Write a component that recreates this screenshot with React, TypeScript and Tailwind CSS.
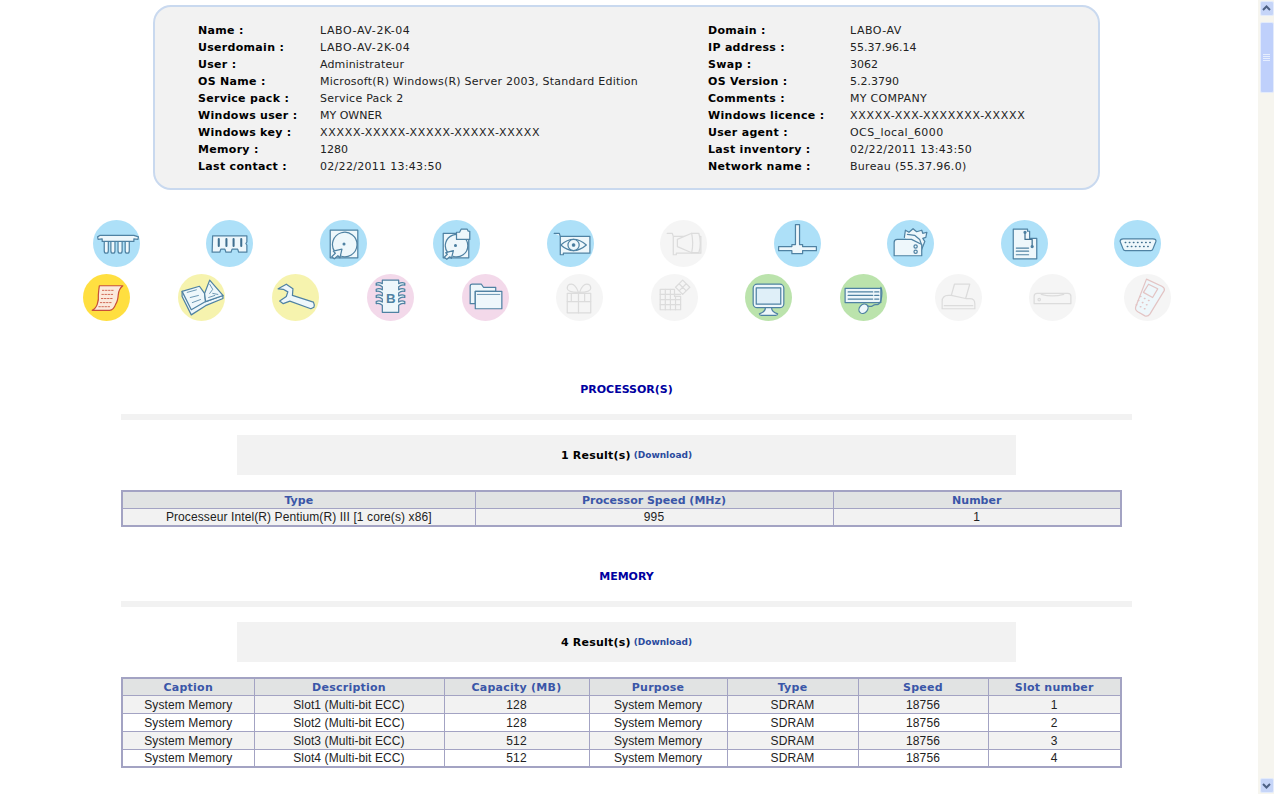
import React from 'react';

const verdana = 'font-["DejaVu_Sans",sans-serif]';

const wide = 'tracking-[0.6px]';
const key = 'tracking-[0.7px]';
const normal = 'tracking-[0.25px]';
const none = 'tracking-normal';

const leftInfo = [
  ['Name :', 'LABO-AV-2K-04', wide],
  ['Userdomain :', 'LABO-AV-2K-04', wide],
  ['User :', 'Administrateur', 'tracking-[0.15px]'],
  ['OS Name :', 'Microsoft(R) Windows(R) Server 2003, Standard Edition', normal],
  ['Service pack :', 'Service Pack 2', normal],
  ['Windows user :', 'MY OWNER', none],
  ['Windows key :', 'XXXXX-XXXXX-XXXXX-XXXXX-XXXXX', key],
  ['Memory :', '1280', none],
  ['Last contact :', '02/22/2011 13:43:50', 'tracking-[0.3px]'],
];

const rightInfo = [
  ['Domain :', 'LABO-AV', 'tracking-[0.5px]'],
  ['IP address :', '55.37.96.14', none],
  ['Swap :', '3062', none],
  ['OS Version :', '5.2.3790', none],
  ['Comments :', 'MY COMPANY', 'tracking-[0.3px]'],
  ['Windows licence :', 'XXXXX-XXX-XXXXXXX-XXXXX', key],
  ['User agent :', 'OCS_local_6000', 'tracking-[0.4px]'],
  ['Last inventory :', '02/22/2011 13:43:50', 'tracking-[0.3px]'],
  ['Network name :', 'Bureau (55.37.96.0)', 'tracking-[0.3px]'],
];

const BLUE = '#ade0f8';
const GRAY = '#f5f5f5';
const PINK = '#f3d9ea';
const PALE = '#f6f3ae';
const GREEN = '#bbe3ac';

const row1: { bg: string; muted?: boolean; art: React.ReactNode }[] = [
  {
    bg: BLUE,
    art: (
      <>
        <path d="M11 21v9q0 2.500 2 2.500t2-2.500v-9M17.500 21v9q0 2.500 2 2.500t2-2.500v-9M24.500 21v9q0 2.500 2 2.500t2-2.500v-9M31.500 21v9q0 2.500 2 2.500t2-2.500v-9" />
        <path d="M7 15h33l4.500 1.500-.5 2.500-4-.5v2.500h-31v-2.500l-4 .5-.5-2.500z" />
      </>
    ),
  },
  {
    bg: BLUE,
    art: (
      <>
        <path d="M6.500 15.500h33.500v6l-1 1.500 1 1.500v7h-8l-1-3h-5.500l-1 3h-5l-1-3h-4l-1 3h-7.500z" />
        <path d="M12.500 18.500v7M20 18.500v7M27 18.500v7M34.500 18.500v7" strokeWidth={2} stroke="#3f6f8f" />
      </>
    ),
  },
  {
    bg: BLUE,
    art: (
      <>
        <rect x="10" y="10" width="27" height="27" />
        <path d="M14.500 31a12 12 0 1 1 5 4" />
        <circle cx="23.500" cy="23.500" r="0.900" fill="#3f6f8f" />
        <path d="M11.500 36l3.500-3.500-2-2 8.500-2-2 8.500-2-2-3.500 3z" />
      </>
    ),
  },
  {
    bg: BLUE,
    art: (
      <>
        <rect x="10" y="13" width="25" height="24" />
        <path d="M14.500 32a11 11 0 1 1 5 3.500" />
        <circle cx="22" cy="25" r="0.900" fill="#3f6f8f" />
        <path d="M11 36.500l3-3-1.500-1.500 7.500-2-2 7.500-1.500-1.500-3 2.500z" />
        <path d="M23 12h3l1.500-3h6l1 2h1.500v8h-13z" />
      </>
    ),
  },
  {
    bg: BLUE,
    art: (
      <>
        <path d="M7 13h5l1 3v18h3v-1.500h26v-16.500h-29" />
        <path d="M13.500 24.500q12.500-11 25 0q-12.500 11-25 0z" />
        <circle cx="26" cy="24.500" r="5.500" />
        <circle cx="26" cy="24.500" r="1.200" fill="#3f6f8f" />
      </>
    ),
  },
  {
    bg: GRAY,
    muted: true,
    art: (
      <>
        <path d="M7 13h5l1 3v18h3v-1.500h24v-16.500h-27" />
        <path d="M17 19l14-6h7q3 10 0 19h-7l-14-6z" />
        <path d="M31 13q2 10 0 19" />
      </>
    ),
  },
  {
    bg: BLUE,
    art: <path d="M21 4.500h4v19.500h3v2h13.500v4h-13.500v3h-10.500v-3h-13v-4h13v-2h3.500z" />,
  },
  {
    bg: BLUE,
    art: (
      <>
        <path d="M17 17l1-7 3.500 2 4-3.500 3.500 3 5-1.500 1 3 4-1-1 5-3 1 2 3-4 10" />
        <path d="M20 14l7 1 5 4 2 6" />
        <path d="M7 22q0-3 3-3h14l10 5v11h-27z" />
        <circle cx="28" cy="26" r="1.600" />
        <circle cx="28" cy="31" r="1.600" />
      </>
    ),
  },
  {
    bg: BLUE,
    art: (
      <>
        <path d="M12 9h14v2h2v7h7v20h-23z" />
        <path d="M23.500 12v7h7v7" stroke="#3f6f8f" />
        <circle cx="23.500" cy="12" r="1" fill="#3f6f8f" />
        <circle cx="30.500" cy="26" r="1" fill="#3f6f8f" />
        <path d="M15 27.500h12M15 30.500h12M15 34h12" />
      </>
    ),
  },
  {
    bg: BLUE,
    art: (
      <>
        <path d="M6 21q0-2.500 3-2.500h29q3.500 0 3 2.500l-3 7.500q-.5 1.500-2 1.500h-25q-1.500 0-2-1.500z" />
        <path d="M11 22h.5M15 22h.5M19 22h.5M23 22h.5M27 22h.5M31 22h.5M35 22h.5M13 26h.5M17 26h.5M21 26h.5M25 26h.5M29 26h.5M33 26h.5" strokeWidth={1.400} stroke="#3f6f8f" />
      </>
    ),
  },
];

const row2: { bg: string; muted?: boolean; stroke?: string; art: React.ReactNode }[] = [
  {
    bg: '#ffdf40',
    stroke: '#c8503a',
    art: (
      <>
        <path d="M16 11.500h23q-4 3-4.500 9t-2.500 9q-2 6-6 6h-17q3.500-1.500 5-6t1-9q.5-6 1-9z" fill="#fbe9dc" />
        <path d="M19 16h12M18.500 20h12M18 24h12M17 28h11M15.500 32h11" strokeDasharray="1.500 1.500" strokeWidth={0.800} />
      </>
    ),
  },
  {
    bg: PALE,
    art: (
      <>
        <path d="M4 17v5l9 18 14-9 17-7v-3l-17 6z" />
        <path d="M4 17l17-5 5 7 1 8-14 8z" />
        <path d="M26 19l5-13 13 15-17 6z" />
        <path d="M9 18l9-2.500M12 23l8-2M14 28l8-3M31 10l3 5-3 4M34 19l5 1M30 23l6-2" strokeWidth={0.800} />
      </>
    ),
  },
  {
    bg: PALE,
    art: <path d="M6 14.500l8-4.500 6.500 4.500-.5 6.500 20.500 6.500q1.500 3 .5 5l-3 1.500-20.500-7.500-6.500 2.500-3.500-2.500 6.500-4.500 1.500-4.500-4.500-2.500z" />,
  },
  {
    bg: PINK,
    art: (
      <>
        <path d="M15 6h16v3.500q3-2 6-.5v2q-3-1-6 1.500v3q3-2 6-.5v2q-3-1-6 1.500v3q3-2 6-.5v2q-3-1-6 1.500v3q3-2 6-.5v2q-3-1-6 1.500v7h-16v-7q-3-2.500-6-1.500v-2q3-1.500 6 .5v-3q-3-2.500-6-1.500v-2q3-1.500 6 .5v-3q-3-2.500-6-1.500v-2q3-1.500 6 .5v-3q-3-2.500-6-1.500v-2q3-1.500 6 .5z" />
        <text x="23.300" y="28" textAnchor="middle" fontSize="13" fontWeight="700" fill="#4f82a3" stroke="none" fontFamily="'Liberation Sans', sans-serif">
          B
        </text>
      </>
    ),
  },
  {
    bg: PINK,
    art: (
      <>
        <path d="M8 12q0-2 2-2h9l2 3h12v4h-20v12h-5z" />
        <path d="M13 17h26v17h-26z" />
        <path d="M15 20h22" strokeWidth={0.800} />
      </>
    ),
  },
  {
    bg: GRAY,
    muted: true,
    art: (
      <>
        <path d="M11 19h23v19h-23z" />
        <path d="M11 27h23M22 19v19M15 19v8M28 19v8" />
        <path d="M22 18q-11 0-11-4t4-4 7 8zM23 18q11 0 11-4t-4-4-7 8z" />
      </>
    ),
  },
  {
    bg: GRAY,
    muted: true,
    art: (
      <>
        <path d="M9 15h14v7h6v13h-20z" />
        <path d="M9 20h20M9 25h20M9 30h20M14 15v20M19 15v20M24 22v13" />
        <path d="M31 6l7 7-7 7-7-7zM27.500 9.500l7 7M34.500 9.500l-7 7" />
      </>
    ),
  },
  {
    bg: GREEN,
    art: (
      <>
        <rect x="8" y="10" width="30" height="23" rx="4" />
        <rect x="11" y="13.500" width="24" height="16" fill="#dfeff8" />
        <path d="M20 33h6q0 4 6 6q0 1.500-2 1.500h-14q-2 0-2-1.500q6-2 6-6z" />
      </>
    ),
  },
  {
    bg: GREEN,
    art: (
      <>
        <path d="M5 14h35v14h-35z" />
        <path d="M8 17.500h24M8 21h24M8 24.500h24M34 17.500h4M34 21h4M34 24.500h4" />
        <ellipse cx="23" cy="34" rx="4" ry="5" transform="rotate(40 23 34)" />
        <path d="M27 31q3 1.500 5 0t4-1 4-4q2-8 0-13" fill="none" />
      </>
    ),
  },
  {
    bg: GRAY,
    muted: true,
    art: (
      <>
        <path d="M16 21l3-11h15l-4 14h-14z" />
        <path d="M7 27q0-6 6-6h3l14 3h4q5 0 5 5v5h-32z" />
        <path d="M9 31h28" />
      </>
    ),
  },
  {
    bg: GRAY,
    muted: true,
    art: (
      <>
        <path d="M5 22q0-3 3-3h30q3 0 3 3v7h-36z" />
        <path d="M12 20q11 3 22 0" />
        <circle cx="10" cy="25" r="1.200" />
      </>
    ),
  },
  {
    bg: GRAY,
    stroke: '#e3c4c4',
    art: (
      <>
        <path d="M22 5l15 7q3 1.500 2.500 4l-14 23q-2 3-5 2l-7-4q-3-2-2-5z" />
        <path d="M24 10l9 4.500-5 8.500-9-5z" />
        <path d="M16 22h.5M20 24h.5M24 26h.5M14 26h.5M18 28h.5M22 30h.5M12 30h.5M16 32h.5M20 34h.5" strokeWidth={1.500} />
      </>
    ),
  },
];

function IconDisc({ bg, muted, stroke, children }: { bg: string; muted?: boolean; stroke?: string; children: React.ReactNode }) {
  return (
    <svg width="47" height="47" viewBox="0 0 46 46" className="block">
      <circle cx="23" cy="23" r="23" fill={bg} />
      <g
        fill={muted ? '#f5f5f5' : '#eef7fb'}
        stroke={stroke ?? (muted ? '#dcdcdc' : '#4f82a3')}
        strokeWidth={1.200}
        strokeLinejoin="round"
        strokeLinecap="round"
      >
        {children}
      </g>
    </svg>
  );
}

function InfoColumn({ rows, labelWidth, left }: { rows: string[][]; labelWidth: string; left: string }) {
  return (
    <div className={left}>
      {rows.map(([label, value, spacing]) => (
        <div key={label} className="flex h-[17px] items-center">
          <span className={`${labelWidth} font-bold tracking-[0.3px] text-black`}>{label}</span>
          <span className={`${spacing} text-[#222222]`}>{value}</span>
        </div>
      ))}
    </div>
  );
}

function SectionHead({ title, count }: { title: string; count: number }) {
  return (
    <>
      <h2 className={`${verdana} h-[17px] text-center text-[11px] leading-[17px] font-bold text-[#0000a0]`}>{title}</h2>
      <div className="mt-4 h-[6px] w-[1011px] bg-[#f2f2f2]"></div>
      <div className="mt-[15px] ml-[116px] flex h-10 w-[779px] items-center justify-center bg-[#f2f2f2] pt-[2px]">
        <span className={`${verdana} text-[11px] font-bold tracking-[0.2px] text-black`}>{count} Result(s)</span>
        <a className={`${verdana} ml-[3px] text-[9px] font-bold text-[#2a4a9e]`}>(Download)</a>
      </div>
    </>
  );
}

function DataTable({ columns, rows, className, headTracking }: { columns: { name: string; width: string }[]; rows: string[][]; className: string; headTracking: string }) {
  return (
    <table className={`${className} table-fixed border-collapse border-2 border-[#a3a3c3] font-["Liberation_Sans",sans-serif] text-[12px] text-[#222222]`}>
      <thead>
        <tr className="h-[17px] bg-[#e1e3e3]">
          {columns.map((c) => (
            <th key={c.name} className={`${c.width} ${verdana} ${headTracking} border border-[#a3a3c3] p-0 pt-[2px] text-[11px] leading-[12px] font-bold text-[#3a56a8]`}>
              {c.name}
            </th>
          ))}
        </tr>
      </thead>
      <tbody>
        {rows.map((r, i) => (
          <tr key={i} className={i % 2 === 0 ? 'h-[18px] bg-[#f2f2f2]' : 'h-[18px] bg-white'}>
            {r.map((cell, j) => (
              <td key={j} className="border border-[#a3a3c3] p-0 pt-px text-center leading-[14px] tracking-[0.1px]">
                {cell}
              </td>
            ))}
          </tr>
        ))}
      </tbody>
    </table>
  );
}

function Scrollbar() {
  return (
    <div className="flex h-[794px] w-4 shrink-0 flex-col items-center bg-[#f6f5ef] pt-px pb-px pl-px">
      <div className="flex h-[15px] w-[14px] items-center justify-center rounded-[2px] border border-[#e3ebfb] bg-[#c6d5f8]">
        <svg width="9" height="7" viewBox="0 0 9 7">
          <path d="M1 5l3.500-3.500 3.500 3.500" fill="none" stroke="#4d6185" strokeWidth="2" />
        </svg>
      </div>
      <div className="mt-[6px] flex h-[71px] w-[14px] flex-col items-center justify-center gap-px rounded-[2px] border border-[#e3ebfb] bg-[#bfd0fb]">
        <div className="h-px w-[7px] bg-[#e6eefe]"></div>
        <div className="h-px w-[7px] bg-[#e6eefe]"></div>
        <div className="h-px w-[7px] bg-[#e6eefe]"></div>
        <div className="h-px w-[7px] bg-[#e6eefe]"></div>
      </div>
      <div className="flex-1"></div>
      <div className="flex h-[15px] w-[14px] items-center justify-center rounded-[2px] border border-[#e3ebfb] bg-[#c6d5f8]">
        <svg width="9" height="7" viewBox="0 0 9 7">
          <path d="M1 2l3.500 3.500 3.500-3.500" fill="none" stroke="#4d6185" strokeWidth="2" />
        </svg>
      </div>
    </div>
  );
}

export default function App() {
  return (
    <div className="flex h-[794px] w-[1274px] overflow-hidden bg-white">
      <main className="w-[1258px] shrink-0">
        <div className="w-[1253px] pt-[5px]">
          {/* machine summary */}
          <section className={`${verdana} mx-auto flex h-[185px] w-[947px] rounded-[18px] border-2 border-[#c9d9ef] bg-[#f2f2f2] pt-4 text-[11px]`}>
            <InfoColumn rows={leftInfo} labelWidth="w-[122px]" left="ml-[43px] w-[510px]" />
            <InfoColumn rows={rightInfo} labelWidth="w-[142px]" left="" />
          </section>

          {/* section icons */}
          <div className="mt-[30px] ml-[59.500px] w-[1135px]">
            <div className="grid grid-cols-10 justify-items-center">
              {row1.map((icon, i) => (
                <IconDisc key={i} bg={icon.bg} muted={icon.muted}>
                  {icon.art}
                </IconDisc>
              ))}
            </div>
            <div className="mt-[7px] grid grid-cols-12 justify-items-center">
              {row2.map((icon, i) => (
                <IconDisc key={i} bg={icon.bg} muted={icon.muted} stroke={icon.stroke}>
                  {icon.art}
                </IconDisc>
              ))}
            </div>
          </div>

          <div className="mt-[60px] ml-[121px] w-[1011px]">
            <SectionHead title="PROCESSOR(S)" count={1} />
            <DataTable
              className="mt-[15px] w-[999px]"
              headTracking="tracking-normal"
              columns={[
                { name: 'Type', width: 'w-[353px]' },
                { name: 'Processor Speed (MHz)', width: 'w-[358px]' },
                { name: 'Number', width: 'w-[288px]' },
              ]}
              rows={[['Processeur Intel(R) Pentium(R) III [1 core(s) x86]', '995', '1']]}
            />

            <div className="mt-[41px]">
              <SectionHead title="MEMORY" count={4} />
            </div>
            <DataTable
              className="mt-[15px] w-[999px]"
              headTracking="tracking-[0.25px]"
              columns={[
                { name: 'Caption', width: 'w-[132px]' },
                { name: 'Description', width: 'w-[190px]' },
                { name: 'Capacity (MB)', width: 'w-[145px]' },
                { name: 'Purpose', width: 'w-[138px]' },
                { name: 'Type', width: 'w-[131px]' },
                { name: 'Speed', width: 'w-[130px]' },
                { name: 'Slot number', width: 'w-[133px]' },
              ]}
              rows={[
                ['System Memory', 'Slot1 (Multi-bit ECC)', '128', 'System Memory', 'SDRAM', '18756', '1'],
                ['System Memory', 'Slot2 (Multi-bit ECC)', '128', 'System Memory', 'SDRAM', '18756', '2'],
                ['System Memory', 'Slot3 (Multi-bit ECC)', '512', 'System Memory', 'SDRAM', '18756', '3'],
                ['System Memory', 'Slot4 (Multi-bit ECC)', '512', 'System Memory', 'SDRAM', '18756', '4'],
              ]}
            />
          </div>
        </div>
      </main>
      <Scrollbar />
    </div>
  );
}
